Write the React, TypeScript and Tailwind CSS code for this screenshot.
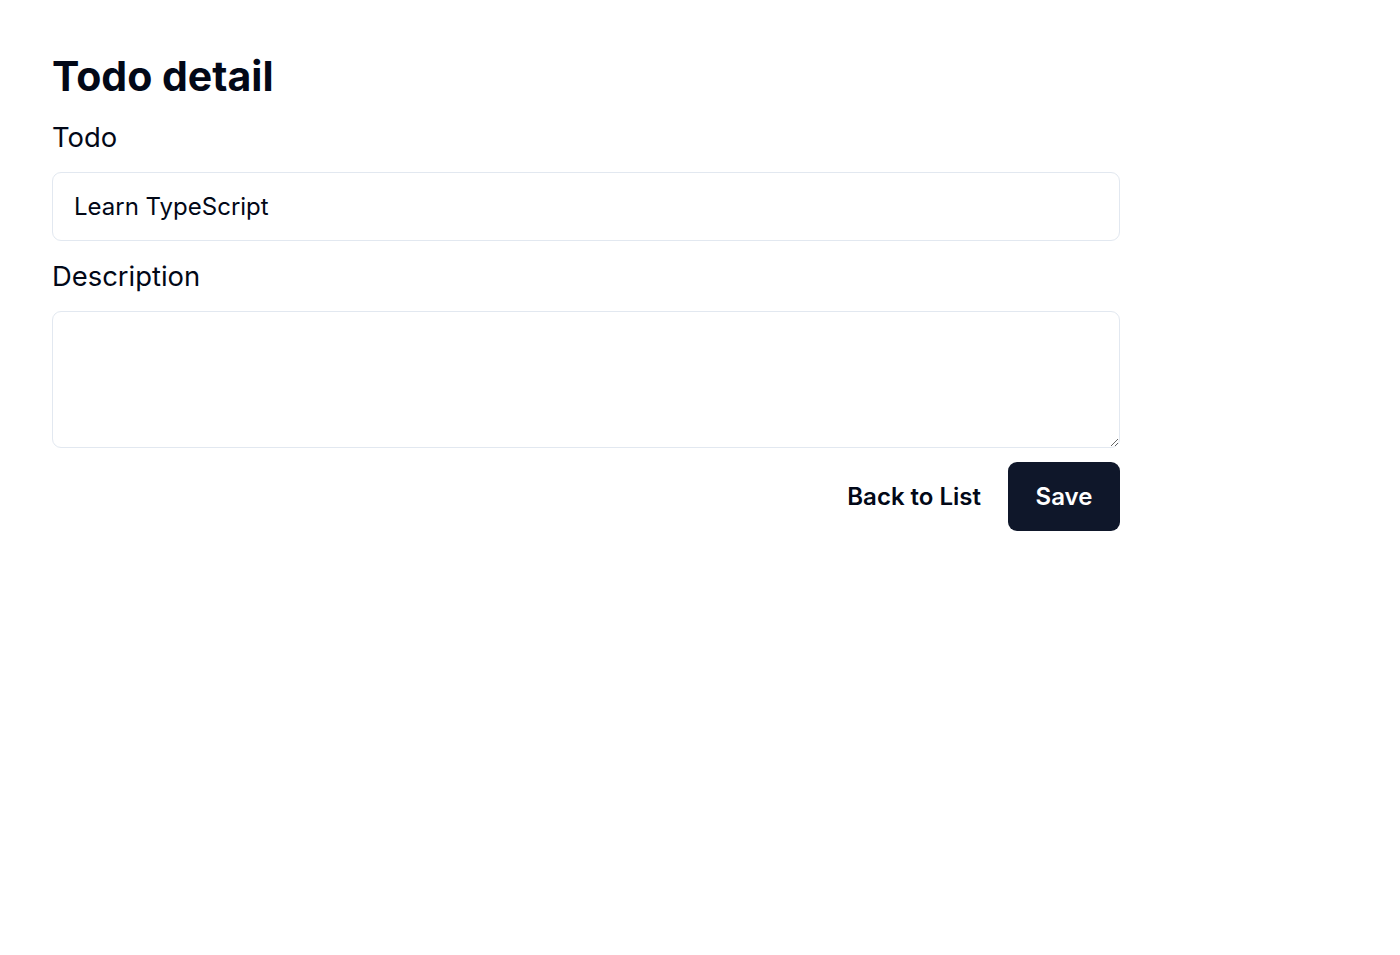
import { useState } from 'react';

export default function App() {
  const [title, setTitle] = useState('Learn TypeScript');
  const [description, setDescription] = useState('');

  return (
    <div className="min-h-screen bg-white font-['Inter',sans-serif] text-[#020817]">
      <div className="w-[1068px] pl-[52px] pt-[52px] box-content">
        <h1 className="text-[41px] leading-[48px] font-bold mb-[16px]">Todo detail</h1>

        <div className="flex flex-col gap-[14px]">
          <label htmlFor="todo" className="text-[27.4px] leading-[42px]">
            Todo
          </label>
          <input
            id="todo"
            type="text"
            value={title}
            onChange={(e) => setTitle(e.target.value)}
            className="h-[69px] w-full rounded-[9px] border-[1.5px] border-[#e2e8f0] px-[21px] text-[24px] outline-none"
          />

          <label htmlFor="description" className="text-[27.4px] leading-[42px]">
            Description
          </label>
          <textarea
            id="description"
            value={description}
            onChange={(e) => setDescription(e.target.value)}
            className="h-[137px] w-full rounded-[9px] border-[1.5px] border-[#e2e8f0] px-[21px] py-[12px] text-[24px] outline-none"
          />
        </div>

        <div className="flex justify-end mt-[14px]">
          <button
            type="button"
            className="h-[69px] px-[27px] rounded-[9px] text-[24px] font-semibold text-[#020817] cursor-pointer"
          >
            Back to List
          </button>
          <button
            type="button"
            className="h-[69px] w-[112px] rounded-[9px] bg-[#0f172a] text-[24px] font-semibold text-white cursor-pointer"
          >
            Save
          </button>
        </div>
      </div>
    </div>
  );
}
